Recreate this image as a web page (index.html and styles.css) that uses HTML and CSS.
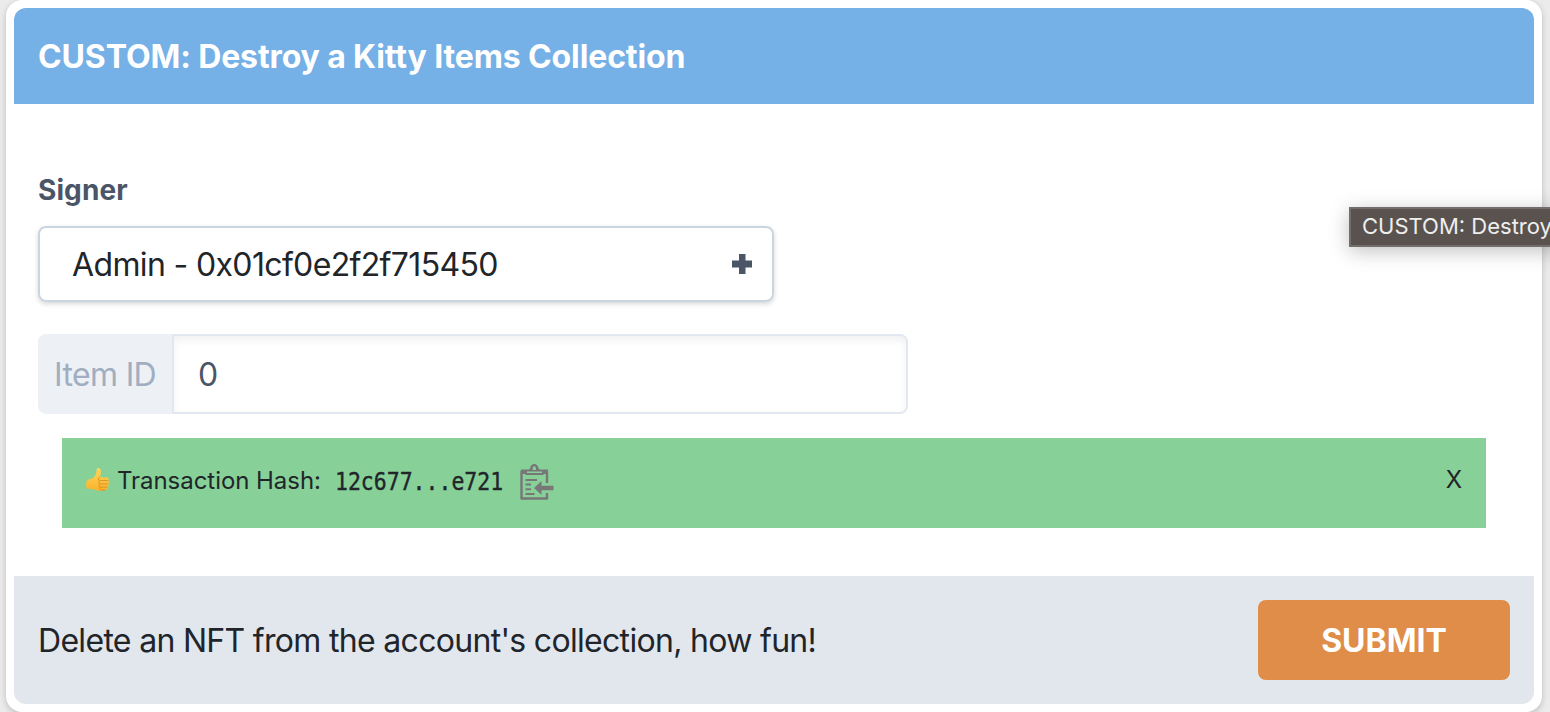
FILE: index.html
```html
<!DOCTYPE html>
<html lang="en">
<head>
<meta charset="utf-8">
<title>Destroy a Kitty Items Collection</title>
<link rel="stylesheet" href="styles.css">
</head>
<body>
<main class="card">
  <header class="card-header"><h1 class="title">CUSTOM: Destroy a Kitty Items Collection</h1></header>
  <section class="card-body">
    <label class="signer-label"><span>Signer</span></label>
    <div class="select">
      <span class="select-value">Admin - 0x01cf0e2f2f715450</span>
      <svg class="plus" viewBox="0 0 20 20"><path d="M7 0h6.500v6.500H20v7h-6.500V20H7v-6.500H0v-7h7z" fill="#4a5568"/></svg>
    </div>
    <div class="field">
      <span class="field-label"><span class="field-name">Item ID</span></span>
      <div class="field-input">0</div>
    </div>
    <div class="alert">
      <svg class="thumb" viewBox="0 0 24 26">
        <defs><linearGradient id="skin" x1="0" y1="0" x2="0" y2="1"><stop offset="0" stop-color="#ffd75a"/><stop offset="1" stop-color="#f9b22b"/></linearGradient></defs>
        <path d="M1 13.500C3 11.800 6 12 8 10c2-2 2.300-4.500 2.700-7.500C11 .6 13.700.5 14.600 2.700c.8 2-.1 5.300-.6 7.300l6.700.4c2.400.2 2.600 2.500 1.500 3.200 1.300.8 1.200 2.700-.1 3.300 1 .9.700 2.700-.6 3.200.7 1.200 0 2.800-1.600 2.900-3.800 1-9.900 1.300-12.900-1L1 21.800c-1.300-2-1.100-6.400 0-8.300z" fill="url(#skin)"/>
        <path d="M13.500 10.400c-1.500.6-1.500 2.600 0 3.200h8.300M13.500 13.700c-1.300.8-1.300 2.600.2 3.200h7.800M13.700 17c-1.200.8-1 2.600.4 3.100h6.800M14.200 20.200c-1 .9-.6 2.600.9 2.800h4" fill="none" stroke="#d48a20" stroke-width=".8" stroke-linecap="round"/>
      </svg>
      <span class="alert-text">Transaction Hash:</span>
      <span class="hash">12c677...e721</span>
      <svg class="copy" viewBox="0 0 34 37" fill="none" stroke="#777">
        <path d="M27 19V7.500H1.500v27H27V29" stroke-width="2.400" stroke-linejoin="round"/>
        <path d="M1 5.500h7.500C9.500 5.500 10 4.500 10.200 3.500 10.800 1.300 12.300 0 14.300 0s3.500 1.300 4.100 3.500c.2 1 .7 2 1.700 2H28V10h-4.500v1H5.500v-1H1z" fill="#777" stroke="none"/>
        <path d="M12.600 6c0-2.300.3-3.700 1.700-3.700S16 3.700 16 6zM7 7.500h15v1.400H7z" fill="#87d199" stroke="none"/>
        <path d="M5.500 16h11.500M5.500 20.600h5.500M5.500 25.200h5.500M5.500 30h9" stroke-width="2"/>
        <path d="M14 24l7.500-7v4.700H33.500v4.600h-12V31z" fill="#777" stroke="none"/>
      </svg>
      <span class="close">X</span>
    </div>
  </section>
  <footer class="card-footer">
    <span class="desc">Delete an NFT from the account's collection, how fun!</span>
    <button class="submit"><span>SUBMIT</span></button>
  </footer>
</main>
<div class="tooltip"><span>CUSTOM: Destroy</span></div>
</body>
</html>
```
FILE: styles.css
```css
* { box-sizing: border-box; }
html, body { height: 100%; overflow: hidden; }
body {
  margin: 0;
  padding: 0 8px 0 6px;
  background: #ebebeb;
  color: #212529;
  font-family: Inter, "Liberation Sans", sans-serif;
  font-size: 32px;
}
.card {
  height: 712px;
  padding: 8px;
  background: #fff;
  border-radius: 16px;
  box-shadow: 0 2px 6px rgba(0, 0, 0, .2);
}
.card-header {
  height: 96px;
  padding: 0 24px;
  display: flex;
  align-items: center;
  background: #75b0e7;
  color: #fff;
  border-radius: 12px 12px 0 0;
}
.title { margin: 0; font-size: 32px; font-weight: 700; letter-spacing: -.12px; white-space: nowrap; }
.card-body { height: 472px; padding: 66px 24px 0; }
.signer-label { display: block; height: 56px; line-height: 40px; color: #4a5568; font-size: 28px; font-weight: 700; letter-spacing: .1px; }
.select {
  width: 736px;
  height: 76px;
  padding: 0 20px 0 32px;
  display: flex;
  align-items: center;
  justify-content: space-between;
  border: 2px solid #cbd5e0;
  border-radius: 8px;
  box-shadow: 0 2px 5px rgba(0, 0, 0, .16);
}
.select-value { letter-spacing: -.64px; }
.plus { width: 20px; height: 20px; }
.field { width: 870px; height: 80px; margin-top: 32px; display: flex; }
.field-label {
  width: 134px;
  padding-left: 16px;
  display: flex;
  align-items: center;
  background: #edf1f6;
  color: #a0aec0;
  border-radius: 8px 0 0 8px;
}
.field-name { letter-spacing: -.65px; }
.field-input {
  flex: 1;
  padding-left: 24px;
  display: flex;
  align-items: center;
  border: 2px solid #e2e8f0;
  border-radius: 0 8px 8px 0;
  box-shadow: inset 0 4px 8px rgba(0, 0, 0, .06);
  color: #4a5568;
}
.alert {
  height: 90px;
  margin: 24px 24px 0;
  padding: 0 24px 2px;
  display: flex;
  align-items: center;
  background: #87d199;
  font-size: 24px;
}
.thumb { width: 24px; height: 26px; margin: 0 7px 4px 0; }
.alert-text { width: 218px; padding-bottom: 4px; letter-spacing: -.05px; white-space: nowrap; }
.hash {
  width: 185px;
  font-family: "DejaVu Sans Mono", monospace;
  font-size: 24px;
  -webkit-text-stroke: .4px currentColor;
  transform: scaleX(.895);
  transform-origin: left;
}
.copy { width: 34px; height: 37px; }
.close { margin-left: auto; padding-bottom: 6px; }
.card-footer {
  height: 128px;
  padding: 0 24px;
  display: flex;
  align-items: center;
  justify-content: space-between;
  background: #e2e7ee;
  border-radius: 0 0 12px 12px;
}
.desc { letter-spacing: -.69px; white-space: nowrap; }
.submit {
  width: 252px;
  height: 80px;
  padding: 0;
  border: 0;
  border-radius: 8px;
  background: #df8d49;
  color: #fff;
  font: 700 32px Inter, sans-serif;
}
.tooltip {
  position: absolute;
  left: 1349px;
  top: 207px;
  width: 220px;
  height: 40px;
  padding-left: 11px;
  line-height: 35px;
  border: 2px solid #736e6c;
  background: #59524f;
  color: #eee;
  font-size: 22px;
  white-space: nowrap;
  box-shadow: 0 4px 20px rgba(0, 0, 0, .25);
}
```
